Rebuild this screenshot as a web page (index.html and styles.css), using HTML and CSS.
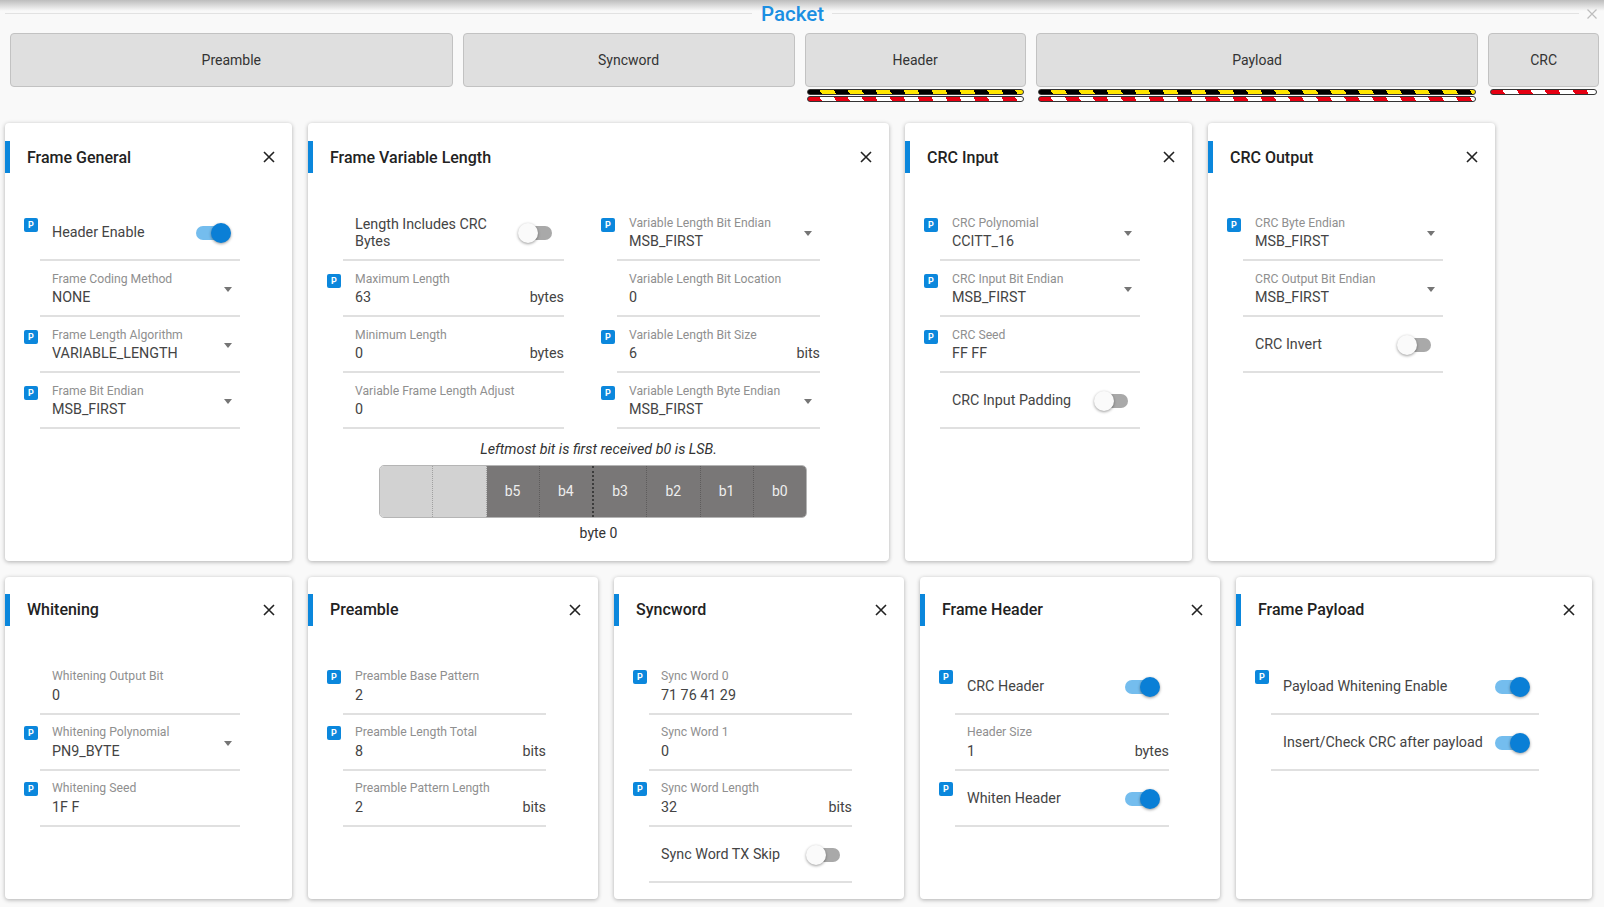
FILE: index.html
```html
<!DOCTYPE html>
<html lang="en">
<head>
	<meta charset="UTF-8">
	<title>Packet</title>
	<link rel="stylesheet" href="styles.css">
</head>
<body>
	<div class="page">
		<!-- Packet title -->
		<div class="top">
			<span class="top-line"></span>
			<h1 class="top-title">Packet</h1>
			<span class="top-line"></span>
			<svg class="top-close" viewBox="0 0 10 10"><path d="M0.5 0.5L9.5 9.5M9.5 0.5L0.5 9.5"/></svg>
		</div>

		<!-- Packet sections -->
		<div class="sections">
			<div class="section grow-4"><div class="section-btn">Preamble</div></div>
			<div class="section grow-3"><div class="section-btn">Syncword</div></div>
			<div class="section grow-2">
				<div class="section-btn">Header</div>
				<div class="stripe stripe-yellow"></div>
				<div class="stripe stripe-red"></div>
			</div>
			<div class="section grow-4">
				<div class="section-btn">Payload</div>
				<div class="stripe stripe-yellow"></div>
				<div class="stripe stripe-red"></div>
			</div>
			<div class="section grow-1">
				<div class="section-btn">CRC</div>
				<div class="stripe stripe-red"></div>
			</div>
		</div>

		<!-- First row of cards -->
		<div class="cards cards-tall">
			<div class="card card-287 fields-200">
				<div class="card-head">
					<h2 class="card-title">Frame General</h2>
					<svg class="card-close" viewBox="0 0 12 12"><path d="M1 1L11 11M11 1L1 11"/></svg>
				</div>
				<div class="card-body">
					<div class="prop">
						<span class="badge">P</span>
						<div class="field">
							<span class="toggle-label">Header Enable</span>
							<span class="switch switch-on"></span>
						</div>
					</div>
					<div class="prop">
						<span class="badge badge-none"></span>
						<div class="field">
							<div class="field-text">
								<div class="field-label">Frame Coding Method</div>
								<div class="field-value">NONE</div>
							</div>
							<span class="arrow"></span>
						</div>
					</div>
					<div class="prop">
						<span class="badge">P</span>
						<div class="field">
							<div class="field-text">
								<div class="field-label">Frame Length Algorithm</div>
								<div class="field-value">VARIABLE_LENGTH</div>
							</div>
							<span class="arrow"></span>
						</div>
					</div>
					<div class="prop">
						<span class="badge">P</span>
						<div class="field">
							<div class="field-text">
								<div class="field-label">Frame Bit Endian</div>
								<div class="field-value">MSB_FIRST</div>
							</div>
							<span class="arrow"></span>
						</div>
					</div>
				</div>
			</div>

			<div class="card card-581">
				<div class="card-head">
					<h2 class="card-title">Frame Variable Length</h2>
					<svg class="card-close" viewBox="0 0 12 12"><path d="M1 1L11 11M11 1L1 11"/></svg>
				</div>
				<div class="card-body card-columns">
					<div class="card-column fields-221">
						<div class="prop">
							<span class="badge badge-none"></span>
							<div class="field">
								<span class="toggle-label">Length Includes CRC Bytes</span>
								<span class="switch"></span>
							</div>
						</div>
						<div class="prop">
							<span class="badge">P</span>
							<div class="field">
								<div class="field-text">
									<div class="field-label">Maximum Length</div>
									<div class="field-value">63<span>bytes</span></div>
								</div>
							</div>
						</div>
						<div class="prop">
							<span class="badge badge-none"></span>
							<div class="field">
								<div class="field-text">
									<div class="field-label">Minimum Length</div>
									<div class="field-value">0<span>bytes</span></div>
								</div>
							</div>
						</div>
						<div class="prop">
							<span class="badge badge-none"></span>
							<div class="field">
								<div class="field-text">
									<div class="field-label">Variable Frame Length Adjust</div>
									<div class="field-value">0</div>
								</div>
							</div>
						</div>
					</div>
					<div class="card-column fields-203">
						<div class="prop">
							<span class="badge">P</span>
							<div class="field">
								<div class="field-text">
									<div class="field-label">Variable Length Bit Endian</div>
									<div class="field-value">MSB_FIRST</div>
								</div>
								<span class="arrow"></span>
							</div>
						</div>
						<div class="prop">
							<span class="badge badge-none"></span>
							<div class="field">
								<div class="field-text">
									<div class="field-label">Variable Length Bit Location</div>
									<div class="field-value">0</div>
								</div>
							</div>
						</div>
						<div class="prop">
							<span class="badge">P</span>
							<div class="field">
								<div class="field-text">
									<div class="field-label">Variable Length Bit Size</div>
									<div class="field-value">6<span>bits</span></div>
								</div>
							</div>
						</div>
						<div class="prop">
							<span class="badge">P</span>
							<div class="field">
								<div class="field-text">
									<div class="field-label">Variable Length Byte Endian</div>
									<div class="field-value">MSB_FIRST</div>
								</div>
								<span class="arrow"></span>
							</div>
						</div>
					</div>
				</div>
				<p class="bits-note">Leftmost bit is first received b0 is LSB.</p>
				<div class="bits">
					<div class="bit bit-empty"></div>
					<div class="bit bit-empty"></div>
					<div class="bit">b5</div>
					<div class="bit bit-nibble">b4</div>
					<div class="bit">b3</div>
					<div class="bit">b2</div>
					<div class="bit">b1</div>
					<div class="bit">b0</div>
				</div>
				<div class="bits-caption">byte 0</div>
			</div>

			<div class="card card-287 fields-200">
				<div class="card-head">
					<h2 class="card-title">CRC Input</h2>
					<svg class="card-close" viewBox="0 0 12 12"><path d="M1 1L11 11M11 1L1 11"/></svg>
				</div>
				<div class="card-body">
					<div class="prop">
						<span class="badge">P</span>
						<div class="field">
							<div class="field-text">
								<div class="field-label">CRC Polynomial</div>
								<div class="field-value">CCITT_16</div>
							</div>
							<span class="arrow"></span>
						</div>
					</div>
					<div class="prop">
						<span class="badge">P</span>
						<div class="field">
							<div class="field-text">
								<div class="field-label">CRC Input Bit Endian</div>
								<div class="field-value">MSB_FIRST</div>
							</div>
							<span class="arrow"></span>
						</div>
					</div>
					<div class="prop">
						<span class="badge">P</span>
						<div class="field">
							<div class="field-text">
								<div class="field-label">CRC Seed</div>
								<div class="field-value">FF FF</div>
							</div>
						</div>
					</div>
					<div class="prop">
						<span class="badge badge-none"></span>
						<div class="field">
							<span class="toggle-label">CRC Input Padding</span>
							<span class="switch"></span>
						</div>
					</div>
				</div>
			</div>

			<div class="card card-287 fields-200">
				<div class="card-head">
					<h2 class="card-title">CRC Output</h2>
					<svg class="card-close" viewBox="0 0 12 12"><path d="M1 1L11 11M11 1L1 11"/></svg>
				</div>
				<div class="card-body">
					<div class="prop">
						<span class="badge">P</span>
						<div class="field">
							<div class="field-text">
								<div class="field-label">CRC Byte Endian</div>
								<div class="field-value">MSB_FIRST</div>
							</div>
							<span class="arrow"></span>
						</div>
					</div>
					<div class="prop">
						<span class="badge badge-none"></span>
						<div class="field">
							<div class="field-text">
								<div class="field-label">CRC Output Bit Endian</div>
								<div class="field-value">MSB_FIRST</div>
							</div>
							<span class="arrow"></span>
						</div>
					</div>
					<div class="prop">
						<span class="badge badge-none"></span>
						<div class="field">
							<span class="toggle-label">CRC Invert</span>
							<span class="switch"></span>
						</div>
					</div>
				</div>
			</div>
		</div>

		<!-- Second row of cards -->
		<div class="cards cards-short">
			<div class="card card-287 fields-200">
				<div class="card-head">
					<h2 class="card-title">Whitening</h2>
					<svg class="card-close" viewBox="0 0 12 12"><path d="M1 1L11 11M11 1L1 11"/></svg>
				</div>
				<div class="card-body">
					<div class="prop">
						<span class="badge badge-none"></span>
						<div class="field">
							<div class="field-text">
								<div class="field-label">Whitening Output Bit</div>
								<div class="field-value">0</div>
							</div>
						</div>
					</div>
					<div class="prop">
						<span class="badge">P</span>
						<div class="field">
							<div class="field-text">
								<div class="field-label">Whitening Polynomial</div>
								<div class="field-value">PN9_BYTE</div>
							</div>
							<span class="arrow"></span>
						</div>
					</div>
					<div class="prop">
						<span class="badge">P</span>
						<div class="field">
							<div class="field-text">
								<div class="field-label">Whitening Seed</div>
								<div class="field-value">1F F</div>
							</div>
						</div>
					</div>
				</div>
			</div>

			<div class="card card-290 fields-203">
				<div class="card-head">
					<h2 class="card-title">Preamble</h2>
					<svg class="card-close" viewBox="0 0 12 12"><path d="M1 1L11 11M11 1L1 11"/></svg>
				</div>
				<div class="card-body">
					<div class="prop">
						<span class="badge">P</span>
						<div class="field">
							<div class="field-text">
								<div class="field-label">Preamble Base Pattern</div>
								<div class="field-value">2</div>
							</div>
						</div>
					</div>
					<div class="prop">
						<span class="badge">P</span>
						<div class="field">
							<div class="field-text">
								<div class="field-label">Preamble Length Total</div>
								<div class="field-value">8<span>bits</span></div>
							</div>
						</div>
					</div>
					<div class="prop">
						<span class="badge badge-none"></span>
						<div class="field">
							<div class="field-text">
								<div class="field-label">Preamble Pattern Length</div>
								<div class="field-value">2<span>bits</span></div>
							</div>
						</div>
					</div>
				</div>
			</div>

			<div class="card card-290 fields-203">
				<div class="card-head">
					<h2 class="card-title">Syncword</h2>
					<svg class="card-close" viewBox="0 0 12 12"><path d="M1 1L11 11M11 1L1 11"/></svg>
				</div>
				<div class="card-body">
					<div class="prop">
						<span class="badge">P</span>
						<div class="field">
							<div class="field-text">
								<div class="field-label">Sync Word 0</div>
								<div class="field-value">71 76 41 29</div>
							</div>
						</div>
					</div>
					<div class="prop">
						<span class="badge badge-none"></span>
						<div class="field">
							<div class="field-text">
								<div class="field-label">Sync Word 1</div>
								<div class="field-value">0</div>
							</div>
						</div>
					</div>
					<div class="prop">
						<span class="badge">P</span>
						<div class="field">
							<div class="field-text">
								<div class="field-label">Sync Word Length</div>
								<div class="field-value">32<span>bits</span></div>
							</div>
						</div>
					</div>
					<div class="prop">
						<span class="badge badge-none"></span>
						<div class="field">
							<span class="toggle-label">Sync Word TX Skip</span>
							<span class="switch"></span>
						</div>
					</div>
				</div>
			</div>

			<div class="card card-300 fields-214">
				<div class="card-head">
					<h2 class="card-title">Frame Header</h2>
					<svg class="card-close" viewBox="0 0 12 12"><path d="M1 1L11 11M11 1L1 11"/></svg>
				</div>
				<div class="card-body">
					<div class="prop">
						<span class="badge">P</span>
						<div class="field">
							<span class="toggle-label">CRC Header</span>
							<span class="switch switch-on"></span>
						</div>
					</div>
					<div class="prop">
						<span class="badge badge-none"></span>
						<div class="field">
							<div class="field-text">
								<div class="field-label">Header Size</div>
								<div class="field-value">1<span>bytes</span></div>
							</div>
						</div>
					</div>
					<div class="prop">
						<span class="badge">P</span>
						<div class="field">
							<span class="toggle-label">Whiten Header</span>
							<span class="switch switch-on"></span>
						</div>
					</div>
				</div>
			</div>

			<div class="card card-356 fields-268">
				<div class="card-head">
					<h2 class="card-title">Frame Payload</h2>
					<svg class="card-close" viewBox="0 0 12 12"><path d="M1 1L11 11M11 1L1 11"/></svg>
				</div>
				<div class="card-body">
					<div class="prop">
						<span class="badge">P</span>
						<div class="field">
							<span class="toggle-label">Payload Whitening Enable</span>
							<span class="switch switch-on"></span>
						</div>
					</div>
					<div class="prop">
						<span class="badge badge-none"></span>
						<div class="field">
							<span class="toggle-label">Insert/Check CRC after payload</span>
							<span class="switch switch-on"></span>
						</div>
					</div>
				</div>
			</div>
		</div>
	</div>
</body>
</html>
```

FILE: styles.css
```css
* {
	box-sizing: border-box;
}
body {
	margin: 0;
	background-color: #f9f9f9;
	font-family: Roboto, "Liberation Sans", sans-serif;
	color: #333;
	overflow: hidden;
}
.page {
	height: 907px;
	background: linear-gradient(#bdbdbd, #f9f9f9 11px) no-repeat;
}

/* Title bar */
.top {
	display: flex;
	align-items: center;
	height: 27px;
	padding: 0 7px 0 5px;
}
.top-line {
	flex: 1;
	height: 1px;
	background-color: #e2e2e2;
}
.top-title {
	margin: 0 8px 0 9px;
	font-size: 20.5px;
	font-weight: 500;
	color: #1b8fe2;
}
.top-close {
	width: 10px;
	height: 10px;
	margin-left: 8px;
	fill: none;
	stroke: #bdbdbd;
	stroke-width: 1.2;
}

/* Packet sections */
.sections {
	display: flex;
	gap: 10px;
	height: 90px;
	margin: 6px 5px 0 10px;
}
.section {
	flex-basis: 0;
}
.grow-1 { flex-grow: 1; }
.grow-2 { flex-grow: 2; }
.grow-3 { flex-grow: 3; }
.grow-4 { flex-grow: 4; }
.section-btn {
	display: flex;
	align-items: center;
	justify-content: center;
	height: 54px;
	margin-bottom: 2px;
	background-color: #dfdfdf;
	border: 1px solid #c2c2c2;
	border-radius: 4px;
	font-size: 14px;
	color: #333;
}
.stripe {
	height: 6px;
	margin: 0 2px 1px;
	border: 1px solid #333;
	border-radius: 3px;
}
.stripe-yellow {
	background: repeating-linear-gradient(60deg, #000, #000 12px, #ffe600 12px, #ffe600 24.2px);
}
.stripe-red {
	background: repeating-linear-gradient(60deg, #e60012, #e60012 12px, #fff 12px, #fff 24.2px);
}

/* Cards */
.cards {
	display: flex;
	gap: 16px;
	margin-left: 5px;
}
.cards-tall {
	height: 438px;
	margin-bottom: 16px;
}
.cards-short {
	height: 322px;
}
.card {
	padding-top: 18px;
	background-color: #fff;
	border-radius: 4px;
	box-shadow: 0 1px 4px rgba(0, 0, 0, 0.3);
}
.cards-short .card {
	padding-top: 16.5px;
}
.card-287 { width: 287px; }
.card-290 { width: 290px; }
.card-300 { width: 300px; }
.card-356 { width: 356px; }
.card-581 { width: 581px; }
.fields-200 { --field-width: 200px; }
.fields-203 { --field-width: 203px; }
.fields-214 { --field-width: 214px; }
.fields-221 { --field-width: 221px; }
.fields-268 { --field-width: 268px; }
.card-head {
	display: flex;
	align-items: center;
	justify-content: space-between;
	height: 32px;
	padding: 0 17px;
	border-left: 5px solid #0b87dc;
}
.card-title {
	margin: 0;
	font-size: 16px;
	font-weight: 500;
	color: #222;
}
.card-close {
	width: 12px;
	height: 12px;
	fill: none;
	stroke: #222;
	stroke-width: 1.6;
}
.card-body {
	margin-top: 32px;
}
.cards-short .card-body {
	margin-top: 33.5px;
}
.card-columns {
	display: flex;
	gap: 18px;
}

/* Property rows */
.prop {
	display: flex;
	height: 56px;
	padding-left: 19px;
}
.badge {
	flex: none;
	width: 14px;
	height: 14px;
	margin: 13px 2px 0 0;
	background-color: #0b87dc;
	border-radius: 2px;
	font-size: 9px;
	font-weight: 700;
	line-height: 14px;
	text-align: center;
	color: #fff;
}
.cards-short .badge {
	margin-top: 11px;
}
.badge-none {
	background: none;
}
.field {
	display: flex;
	align-items: center;
	width: var(--field-width);
	padding: 2px 0 0 12px;
	border-bottom: 2px solid #e0e0e0;
}
.field-text {
	flex: 1;
	align-self: flex-start;
	padding-top: 9px;
}
.cards-short .field-text {
	padding-top: 8px;
}
.field-label {
	font-size: 12.2px;
	line-height: 14px;
	color: #8f8f8f;
}
.field-value {
	display: flex;
	justify-content: space-between;
	margin-top: 1px;
	font-size: 14.3px;
	line-height: 20px;
	color: #444;
}
.cards-short .field-value {
	margin-top: 2px;
}
.toggle-label {
	flex: 1;
	font-size: 14.3px;
	line-height: 17.5px;
	color: #444;
}
.arrow {
	flex: none;
	width: 0;
	height: 0;
	margin-right: 8px;
	border-top: 5px solid #757575;
	border-left: 4.5px solid transparent;
	border-right: 4.5px solid transparent;
}
.switch {
	position: relative;
	flex: none;
	width: 32px;
	height: 14px;
	margin: 0 12px 0 8px;
	background-color: #a9a9a9;
	border-radius: 7px;
}
.switch::after {
	content: "";
	position: absolute;
	top: -3px;
	left: -2px;
	width: 20px;
	height: 20px;
	background-color: #fafafa;
	border-radius: 50%;
	box-shadow: 0 1px 3px rgba(0, 0, 0, 0.4);
}
.switch-on {
	background-color: #74bdee;
}
.switch-on::after {
	left: 15px;
	background-color: #0a7fd6;
}

/* Bit diagram */
.bits-note {
	margin: 10px 0 6px;
	font-size: 14.3px;
	font-style: italic;
	line-height: 20px;
	text-align: center;
	color: #333;
}
.bits {
	display: flex;
	width: 428px;
	height: 53px;
	margin-left: 71px;
	border: 1px solid #b5b5b5;
	border-radius: 5px;
	overflow: hidden;
}
.bit {
	display: flex;
	flex: 1;
	align-items: center;
	justify-content: center;
	padding-bottom: 1px;
	background-color: #797777;
	border-right: 1px dotted #5e5c5c;
	font-size: 14px;
	color: #eee;
}
.bit:last-child {
	border-right: 0;
}
.bit-empty {
	background-color: #d2d2d2;
	border-right-color: #a0a0a0;
}
.bit-nibble {
	border-right: 2px dotted #3c3c3c;
}
.bits-caption {
	margin-top: 5px;
	font-size: 14px;
	line-height: 20px;
	text-align: center;
	color: #333;
}
```
